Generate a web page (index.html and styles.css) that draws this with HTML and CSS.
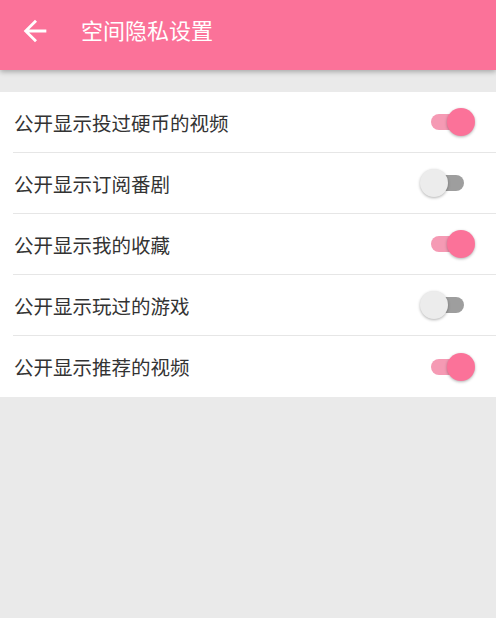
FILE: index.html
```html
<!DOCTYPE html>
<html lang="zh-CN">
<head>
<meta charset="utf-8">
<link rel="stylesheet" href="styles.css">
</head>
<body>
<header class="bar">
  <svg class="back" viewBox="0 0 24 24"><path d="M20 11H7.83l5.59-5.59L12 4l-8 8 8 8 1.41-1.41L7.83 13H20v-2z" fill="#fff"/></svg>
  <span class="title">空间隐私设置</span>
</header>
<ul class="list">
  <li class="row"><span class="label">公开显示投过硬币的视频</span><span class="sw on"><span class="knob"></span></span></li>
  <li class="row"><span class="label">公开显示订阅番剧</span><span class="sw"><span class="knob"></span></span></li>
  <li class="row"><span class="label">公开显示我的收藏</span><span class="sw on"><span class="knob"></span></span></li>
  <li class="row"><span class="label">公开显示玩过的游戏</span><span class="sw"><span class="knob"></span></span></li>
  <li class="row"><span class="label">公开显示推荐的视频</span><span class="sw on"><span class="knob"></span></span></li>
</ul>
</body>
</html>
```
FILE: styles.css
```css
* { box-sizing: border-box; }
html, body { margin: 0; padding: 0; }
body {
  width: 496px;
  height: 618px;
  background: #eaeaea;
  font-family: "Noto Sans CJK SC", "Noto Sans", sans-serif;
  overflow: hidden;
}
.bar {
  height: 70px;
  background: #fb7299;
  display: flex;
  align-items: center;
  padding-left: 18px;
  box-shadow: 0 2px 5px rgba(0,0,0,0.28);
  position: relative;
  z-index: 1;
}
.back { width: 34px; height: 34px; margin-top: -8px; flex: none; }
.title {
  color: #fff;
  font-size: 22px;
  margin-left: 29px;
  margin-top: -12px;
}
.list {
  list-style: none;
  margin: 22px 0 0;
  padding: 0 0 0 13px;
  background: #fff;
}
.row {
  height: 61px;
  display: flex;
  align-items: center;
  justify-content: space-between;
  border-bottom: 1px solid #e6e6e6;
  padding-right: 32px;
}
.row:last-child { border-bottom: none; }
.label {
  font-size: 19.5px;
  color: #333;
  margin-left: 1px;
}
.sw {
  position: relative;
  width: 33px;
  height: 16px;
  border-radius: 8px;
  background: #9e9e9e;
}
.sw .knob {
  position: absolute;
  top: 50%;
  left: -11px;
  width: 28px;
  height: 28px;
  margin-top: -14px;
  border-radius: 50%;
  background: #ececec;
  box-shadow: 0 1px 3px rgba(0,0,0,0.3);
}
.sw.on { background: #f59ab4; }
.sw.on .knob { left: 16px; background: #fb7299; }
```
